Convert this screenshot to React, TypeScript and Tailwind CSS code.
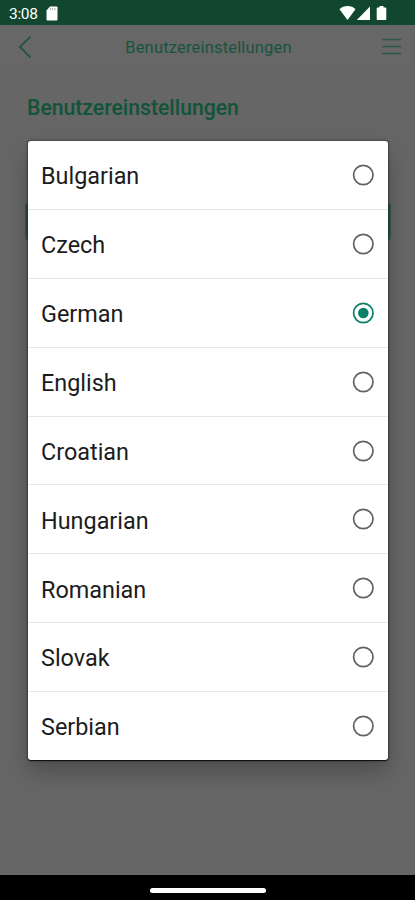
import clsx from 'clsx';
import React, { useState } from 'react';

const LANGUAGES = [
  'Bulgarian',
  'Czech',
  'German',
  'English',
  'Croatian',
  'Hungarian',
  'Romanian',
  'Slovak',
  'Serbian',
];

interface LanguageRowProps {
  label: string;
  selected: boolean;
  onSelect: () => void;
}

const StatusBar = () => {
  return (
    <div className="flex h-[25px] shrink-0 items-center bg-[#11472f] pl-[9px] pr-[28px] text-white">
      <span className="mt-[4px] w-[30px] whitespace-nowrap text-[15.5px] leading-none tracking-[-0.3px]">
        3:08
      </span>
      <svg className="ml-[6px] mt-[1px]" width="13" height="15" viewBox="0 0 13 15" fill="none">
        <path d="M5 .5h6.500a1 1 0 0 1 1 1v12a1 1 0 0 1-1 1h-9a1 1 0 0 1-1-1V4.500z" fill="#fff" />
        <path d="M5.5 2v2.2M7.7 2v2.2M9.9 2v2.2" stroke="#9aa8a0" strokeWidth="1" />
      </svg>
      <svg className="ml-auto mt-[1px]" width="48" height="16" viewBox="0 0 48 16" fill="#fff">
        <path d="M.5 4.2C2.7 2 5.3 1 8.5 1s5.8 1 8 3.2L8.5 15z" />
        <path d="M31 1.5V15H17.8z" />
        <path d="M40.5 1h4v1.5h2a.8.8 0 0 1 .8.8v10.900a.8.8 0 0 1-.8.8h-8a.8.8 0 0 1-.8-.8V3.3a.8.8 0 0 1 .8-.8h2z" />
      </svg>
    </div>
  );
};

const Header = () => {
  return (
    <div className="flex h-[43px] shrink-0 items-center justify-between bg-[#676767] pl-[18px] pr-[14px] text-[#17543d]">
      <svg width="14" height="24" viewBox="0 0 14 24" fill="none" stroke="currentColor" strokeWidth="1.6">
        <path d="M12.5 1.500 2 12l10.500 10.500" />
      </svg>
      <p className="ml-[3px] mt-[4px] text-[16.5px] leading-none tracking-[0.18px]">
        Benutzereinstellungen
      </p>
      <svg width="19" height="18" viewBox="0 0 19 18" fill="none" stroke="#2d5848" strokeWidth="1.6">
        <path d="M0 1.500h19M0 8.500h19M0 15.500h19" />
      </svg>
    </div>
  );
};

const LanguageRow: React.FC<LanguageRowProps> = ({ label, selected, onSelect }) => {
  return (
    <button
      role="radio"
      aria-checked={selected}
      onClick={onSelect}
      className="flex w-full flex-1 items-center justify-between border-b border-[#e6e6e6] pl-[13px] pr-[14px] last:border-b-0"
    >
      <span className="mt-[4px] text-[23.4px] leading-none text-[#1c1c1c]">{label}</span>
      <svg
        className={clsx(selected ? 'text-[#0b8066]' : 'text-[#626262]')}
        width="22"
        height="22"
        viewBox="0 0 22 22"
        fill="none"
      >
        <circle cx="11.3" cy="11" r="9.700" stroke="currentColor" strokeWidth="1.7" />
        {selected && <circle cx="11.3" cy="11" r="5.3" fill="currentColor" />}
      </svg>
    </button>
  );
};

const App = () => {
  const [language, setLanguage] = useState('German');

  return (
    <div className="relative flex h-[900px] w-[415px] flex-col overflow-hidden bg-[#666666] font-[Roboto,sans-serif]">
      <StatusBar />
      <Header />

      <div className="flex-1 px-[25px] pt-[28px]">
        <h1 className="pl-[2px] text-[21.2px] font-medium leading-[24px] text-[#11543a]">
          Benutzereinstellungen
        </h1>
        <div className="-mr-px mt-[83px] h-[37px] rounded-[3px] bg-[#35574d]" />
      </div>

      <div className="flex h-[25px] shrink-0 items-center justify-center bg-black">
        <div className="mt-[5px] h-[5px] w-[116px] rounded-full bg-white" />
      </div>

      <div
        role="radiogroup"
        className="absolute left-[28px] top-[141px] flex h-[619px] w-[360px] flex-col rounded-[3px] bg-white shadow-[0_1px_1px_0_rgba(0,0,0,0.8),0_0_2px_1px_rgba(0,0,0,0.3),0_12px_22px_rgba(0,0,0,0.25)]"
      >
        {LANGUAGES.map((name) => (
          <LanguageRow
            key={name}
            label={name}
            selected={name === language}
            onSelect={() => setLanguage(name)}
          />
        ))}
      </div>
    </div>
  );
};

export default App;
